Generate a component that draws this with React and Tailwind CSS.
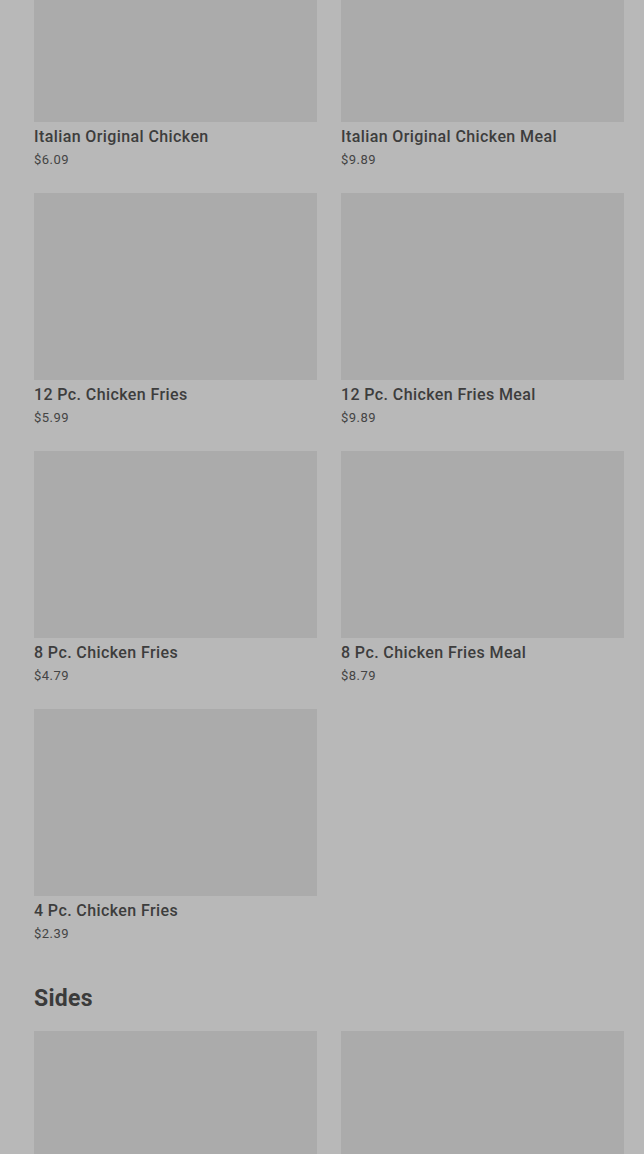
import React from 'react'

const chicken = [
  { name: 'Italian Original Chicken', price: '$6.09' },
  { name: 'Italian Original Chicken Meal', price: '$9.89' },
  { name: '12 Pc. Chicken Fries', price: '$5.99' },
  { name: '12 Pc. Chicken Fries Meal', price: '$9.89' },
  { name: '8 Pc. Chicken Fries', price: '$4.79' },
  { name: '8 Pc. Chicken Fries Meal', price: '$8.79' },
  { name: '4 Pc. Chicken Fries', price: '$2.39' },
]

const MenuCard = ({ name, price }) => (
  <div className="flex flex-col">
    <div className="h-[187px] w-full bg-[#ababab]" />
    {name && (
      <>
        <div className="mt-[5px] text-[16px] leading-[20px] font-medium tracking-[0.4px] text-[#3d3d3d]">{name}</div>
        <div className="mt-[3px] text-[13px] leading-[20px] tracking-[0.5px] text-[#444444]">{price}</div>
      </>
    )}
  </div>
)

export default function App() {
  return (
    <div
      className="h-[1154px] overflow-hidden bg-[#b8b8b8] pl-[34px] pr-[20px]"
      style={{ fontFamily: 'Roboto, "Liberation Sans", sans-serif' }}
    >
      <div className="mt-[-65px] grid grid-cols-2 gap-x-[24px] gap-y-[23px]">
        {chicken.map((item) => (
          <MenuCard key={item.name} {...item} />
        ))}
      </div>

      <h2 className="mt-[40px] mb-[17px] text-[23px] leading-[30px] font-bold tracking-[0.3px] text-[#3b3b3b]">Sides</h2>

      <div className="grid grid-cols-2 gap-x-[24px] gap-y-[24px]">
        <MenuCard />
        <MenuCard />
      </div>
    </div>
  )
}
